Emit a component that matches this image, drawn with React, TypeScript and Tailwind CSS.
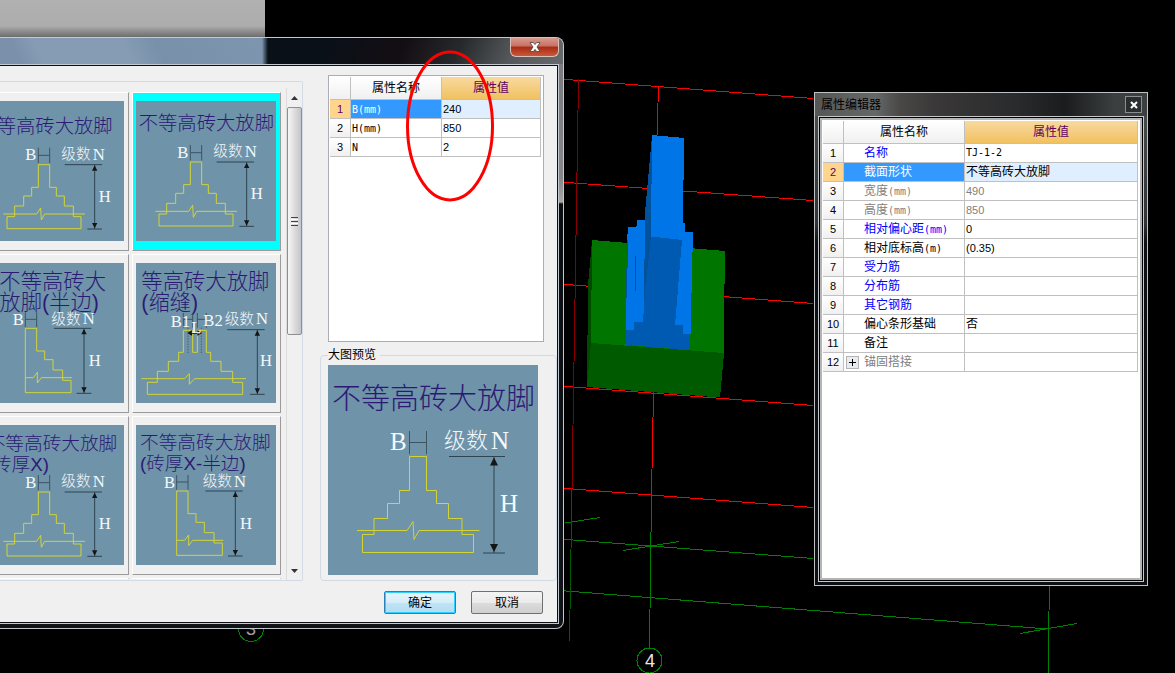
import type { ReactNode } from "react";
import clsx from "clsx";

type Row = {
  name: string;
  unit?: string;
  value?: string;
  tone?: "blue" | "gray";
  expandable?: boolean;
};

const sectionRows: Row[] = [
  { name: "", unit: "B(mm)", value: "240" },
  { name: "", unit: "H(mm)", value: "850" },
  { name: "", unit: "N", value: "2" },
];

const propertyRows: Row[] = [
  { name: "名称", value: "TJ-1-2", tone: "blue" },
  { name: "截面形状", value: "不等高砖大放脚", tone: "blue" },
  { name: "宽度", unit: "(mm)", value: "490", tone: "gray" },
  { name: "高度", unit: "(mm)", value: "850", tone: "gray" },
  { name: "相对偏心距", unit: "(mm)", value: "0", tone: "blue" },
  { name: "相对底标高", unit: "(m)", value: "(0.35)" },
  { name: "受力筋", tone: "blue" },
  { name: "分布筋", tone: "blue" },
  { name: "其它钢筋", tone: "blue" },
  { name: "偏心条形基础", value: "否" },
  { name: "备注" },
  { name: "锚固搭接", tone: "gray", expandable: true },
];

/** Latin text is set smaller than the Chinese text beside it */
function valueFont(value?: string) {
  if (!value) return "";
  if (/^[A-Z]/.test(value)) return "font-['DejaVu_Sans_Mono',monospace] text-[10px]";
  if (/^[\d(]/.test(value)) return "font-['Liberation_Sans',sans-serif] text-[11px]";
  return "";
}

/**
 * Grid with numbered rows, a name column and a value column
 * @param selected - index of the highlighted row
 * @param indent - leaves room for the expander in front of the names
 */
function PropertyTable({
  rows,
  selected,
  indent,
  label,
}: {
  rows: Row[];
  selected: number;
  indent?: boolean;
  label: string;
}) {
  const line = "border-b border-r border-[#c0c0c0]";
  return (
    <table
      aria-label={label}
      className="w-full table-fixed border-separate border-spacing-0 text-xs leading-[18px]"
    >
      <colgroup>
        <col className="w-[21px]" />
        <col className={indent ? "w-[121px]" : "w-[91px]"} />
        <col />
      </colgroup>
      <thead>
        <tr className="leading-[22px]">
          <th className={clsx(line, "bg-linear-to-b from-white to-[#f0f0f0] p-0")} />
          <th className={clsx(line, "bg-linear-to-b from-white to-[#f0f0f0] p-0 font-normal")}>
            属性名称
          </th>
          <th
            className={clsx(
              line,
              "bg-linear-to-b from-[#f9d99f] to-[#f1c15f] p-0 font-normal text-[#600060]",
            )}
          >
            属性值
          </th>
        </tr>
      </thead>
      <tbody>
        {rows.map((row, i) => {
          const active = i === selected;
          return (
            <tr key={row.name + row.unit}>
              <th
                scope="row"
                className={clsx(
                  line,
                  "p-0 font-['Liberation_Sans',sans-serif] text-[11px] font-normal",
                  active
                    ? "bg-[#ffd58d] text-[#600060]"
                    : "bg-linear-to-b from-white to-[#f0f0f0]",
                )}
              >
                {i + 1}
              </th>
              <td
                className={clsx(
                  line,
                  "p-0",
                  active && "bg-[#3399ff] text-white",
                  !active && row.tone === "blue" && "text-[#0000ff]",
                  !active && row.tone === "gray" && "text-[#808080]",
                )}
              >
                <div className="flex h-[18px] items-center">
                  {indent && (
                    <span className="flex w-[19px] shrink-0 pl-[2px]">
                      {row.expandable && (
                        <button
                          type="button"
                          aria-label="展开"
                          className="flex size-[13px] items-center justify-center border border-[#b4b4b4] bg-[#e8ebf0] text-black"
                        >
                          <svg viewBox="0 0 7 7" className="size-[7px]" stroke="currentColor">
                            <path d="M0 3.5H7M3.5 0V7" />
                          </svg>
                        </button>
                      )}
                    </span>
                  )}
                  <span className="whitespace-nowrap pl-px">
                    {row.name}
                    {row.unit && (
                      <span className="font-['DejaVu_Sans_Mono',monospace] text-[10px]">
                        {row.unit}
                      </span>
                    )}
                  </span>
                </div>
              </td>
              <td
                className={clsx(
                  line,
                  "py-0 pr-0 pl-px",
                  valueFont(row.value),
                  active && "bg-[#e0efff]",
                  row.tone === "gray" && "text-[#808080]",
                )}
              >
                {row.value}
              </td>
            </tr>
          );
        })}
      </tbody>
    </table>
  );
}

/** Text of a footing drawing, white serif for the dimension names */
function Mark({ x, y, children }: { x: number; y: number; children: string }) {
  return (
    <text x={x} y={y} fontSize={25} fill="#f4f9fc" className="font-['Liberation_Serif',serif]">
      {children}
    </text>
  );
}

function Levels({ x, y }: { x: number; y: number }) {
  return (
    <>
      <text x={x} y={y - 1} fontSize={22} fill="#f2f7fa" className="font-light">
        级数
      </text>
      <Mark x={x + 47} y={y}>
        N
      </Mark>
    </>
  );
}

/** Height dimension with arrow heads on both ends */
function HeightDim({ x, top, bottom }: { x: number; top: number; bottom: number }) {
  return (
    <g stroke="#2f4450" fill="none">
      <path
        vectorEffect="non-scaling-stroke"
        d={`M${x - 45} ${top}H${x + 11}M${x - 11} ${bottom}H${x + 11}M${x} ${top}V${bottom}`}
      />
      <path
        stroke="none"
        fill="#151515"
        d={`M${x} ${top + 1}l4 8h-8zM${x} ${bottom - 1}l4 -8h-8z`}
      />
    </g>
  );
}

function Outline({ d }: { d: string }) {
  return <path d={d} fill="none" stroke="#d2d436" strokeWidth={1} vectorEffect="non-scaling-stroke" />;
}

function Ticks({ d }: { d: string }) {
  return <path d={d} fill="none" stroke="#3c5563" strokeWidth={1} vectorEffect="non-scaling-stroke" />;
}

/** Symmetric stepped footing */
function FullFooting({ dy = 0 }: { dy?: number }) {
  return (
    <g transform={`translate(0 ${dy})`}>
      <Ticks d="M81.5 66V89M98.5 66V89M81.5 77.5H98.5" />
      <Mark x={62} y={85}>
        B
      </Mark>
      <Levels x={116} y={84} />
      <HeightDim x={166} top={91.5} bottom={188} />
      <Mark x={172} y={147}>
        H
      </Mark>
      <Outline d="M81.5 91.5H98.5V125.5H108.5V138.5H120.5V153.5H134V169.5H145.5V187.5H34.5V169.5H46V153.5H59.5V138.5H71.5V125.5H81.5Z" />
      <Outline d="M29 165.5H79L85 156.5L86 174.5L91 165.5H151.5" />
    </g>
  );
}

/** Footing stepped on its right side only */
function HalfFooting({ dx = 0, dy = 0 }: { dx?: number; dy?: number }) {
  return (
    <g transform={`translate(${dx} ${dy})`}>
      <Ticks d="M62 74V96M79 74V96M62 84.5H79" />
      <Mark x={43} y={93}>
        B
      </Mark>
      <Levels x={101} y={92} />
      <HeightDim x={150} top={98} bottom={195.5} />
      <Mark x={157} y={155}>
        H
      </Mark>
      <Outline d="M62 98H79V132H91V145H103.5V160.5H118V176H130.5V194.5H62Z" />
      <Outline d="M62 172H74L80 164V180L86 172H132" />
    </g>
  );
}

/** Footing with an expansion joint in the middle */
function JointFooting() {
  return (
    <g>
      <Ticks d="M71 75V97M85 75V97M71 84.5H85M92 75V97M105.5 75V97M92 84.5H105.5" />
      <path d="M78 97V136M98 97V136" stroke="#33444e" strokeDasharray="2 2" />
      <Outline d="M71 101H85V134H92V101H105.5V134H112V147.5H127.5V162.5H145V179H160V197H17V179H32V162.5H48.5V147.5H64V134H71Z" />
      <Outline d="M8 173.5H73L80 166V182L88 173.5H165" />
      <path d="M77 105l7 -4v8zM99 105l-7 -4v8zM80 104.5H96V106H80z" fill="#111" />
      <Mark x={52} y={96}>
        B1
      </Mark>
      <Mark x={101} y={95}>
        B2
      </Mark>
      <Mark x={83} y={105}>
        L
      </Mark>
      <Levels x={133} y={92} />
      <HeightDim x={182} top={100} bottom={197} />
      <Mark x={186} y={155}>
        H
      </Mark>
    </g>
  );
}

function Sketch({
  title,
  size,
  x,
  y,
  className,
  children,
}: {
  title: string[];
  size: number;
  x: number;
  y: number;
  className: string;
  children: ReactNode;
}) {
  return (
    <svg viewBox="0 0 210 210" className={clsx("block shrink-0 bg-[#6f93a9]", className)}>
      {title.map((text, i) => (
        <text
          key={text}
          x={x}
          y={y + i * 31}
          fontSize={size}
          fill="#2b1a74"
          className="font-light"
        >
          {text}
        </text>
      ))}
      {children}
    </svg>
  );
}

function Thumb({
  label,
  selected,
  children,
}: {
  label: string;
  selected?: boolean;
  children: ReactNode;
}) {
  return (
    <button
      type="button"
      aria-label={label}
      className={clsx(
        "h-[159px] w-[149px] border border-t-white border-r-[#9a9a9a] border-b-[#9a9a9a] border-l-white pt-2 pl-[3px]",
        selected ? "bg-[#00ffff]" : "bg-[#f0f0f0]",
      )}
    >
      <span className="flex h-full items-start">{children}</span>
    </button>
  );
}

function Thumbnails() {
  return (
    <div className="mt-[10px] flex h-[487px] min-w-0 flex-1 justify-end overflow-hidden">
      <div className="grid shrink-0 grid-cols-[149px_149px] content-start gap-x-[3px] gap-y-[3px]">
        <Thumb label="等高砖大放脚">
          <Sketch title={["不等高砖大放脚"]} size={29} x={-10} y={48} className="size-[140px]">
            <FullFooting dy={4} />
          </Sketch>
        </Thumb>
        <Thumb label="不等高砖大放脚" selected>
          <Sketch title={["不等高砖大放脚"]} size={29} x={4} y={44} className="size-[140px]">
            <FullFooting />
          </Sketch>
        </Thumb>
        <Thumb label="不等高砖大放脚(半边)">
          <Sketch title={["不等高砖大", "放脚(半边)"]} size={32} x={23} y={39} className="size-[140px]">
            <HalfFooting />
          </Sketch>
        </Thumb>
        <Thumb label="等高砖大放脚(缩缝)">
          <Sketch title={["等高砖大放脚", "(缩缝)"]} size={32} x={8} y={39} className="size-[140px]">
            <JointFooting />
          </Sketch>
        </Thumb>
        <Thumb label="不等高砖大放脚(砖厚X)">
          <Sketch title={["不等高砖大放脚", "(砖厚X)"]} size={28} x={4} y={38} className="size-[140px]">
            <FullFooting dy={9} />
          </Sketch>
        </Thumb>
        <Thumb label="不等高砖大放脚(砖厚X-半边)">
          <Sketch
            title={["不等高砖大放脚", "(砖厚X-半边)"]}
            size={28}
            x={6}
            y={36}
            className="size-[140px]"
          >
            <HalfFooting dx={-1} dy={1} />
          </Sketch>
        </Thumb>
        {/* next row, mostly scrolled out of sight */}
        <Thumb label="下一项">{null}</Thumb>
        <Thumb label="末项">{null}</Thumb>
      </div>
    </div>
  );
}

function ScrollBar() {
  return (
    <div className="mt-[6px] ml-[5px] flex w-4 shrink-0 flex-col border-l border-[#dcdcdc] bg-[#f0f0f0]">
      <button type="button" aria-label="向上滚动" className="flex h-[19px] items-center justify-center">
        <svg viewBox="0 0 7 4" className="h-1 w-[7px]">
          <path d="M0 4L3.5 0L7 4z" fill="#333" />
        </svg>
      </button>
      <div className="flex h-[228px] flex-col items-center justify-center gap-px rounded-xs border border-[#8f8f8f] bg-linear-to-r from-[#f6f6f6] to-[#c4c4c8]">
        <span className="h-px w-[7px] bg-[#444]" />
        <span className="h-px w-[7px] bg-[#fff]" />
        <span className="h-px w-[7px] bg-[#444]" />
        <span className="h-px w-[7px] bg-[#fff]" />
        <span className="h-px w-[7px] bg-[#444]" />
      </div>
      <div className="flex-1" />
      <button type="button" aria-label="向下滚动" className="flex h-[18px] items-center justify-center">
        <svg viewBox="0 0 7 4" className="h-1 w-[7px]">
          <path d="M0 0L3.5 4L7 0z" fill="#333" />
        </svg>
      </button>
    </div>
  );
}

/** Model view behind the windows: axis grid and the footing solid */
function Scene() {
  return (
    <svg
      viewBox="0 0 1175 673"
      className="absolute top-0 left-0 h-[673px] w-[1175px]"
      fill="none"
      aria-hidden="true"
    >
      <g stroke="#ff0000" shapeRendering="crispEdges">
        <path d="M560 79L813 98.5M560 182L813 200.5M560 284L813 303.5M560 386L813 405.5M560 488L813 507.5" />
        <path d="M658.5 86L657 136M653.5 392L651.5 495" />
        <path d="M578.5 79L572 488" stroke="#8a0000" />
      </g>
      <g stroke="#008000" shapeRendering="crispEdges">
        <path d="M560 539L813 558.5M560 590.5L1048 629" />
        <path d="M565 523L600 517.5M623 550.5L679 541.5M1020 633.5L1077 623.5" />
        <path d="M651.5 495L649.5 648M1049.5 580L1048 673" />
        <path d="M572 488L569.5 641" stroke="#005c00" />
        <circle cx="649.5" cy="660.5" r="12.5" />
        <circle cx="251" cy="629" r="12.5" />
      </g>
      <g shapeRendering="crispEdges">
        <path d="M592 240L591 343L587 387L588 285z" fill="#004a00" />
        <path d="M592 240L725 251L723.5 353L591 343z" fill="#007500" />
        <path d="M591 343L724 353L720 397.5L587 387z" fill="#005a00" />
        <path
          d="M652 135L684 138L683 223H685V231.5L693 232L690.5 334L689.5 350L625.5 345L627 240L628 227.5L636.5 226.5L637.5 219.5L645 220z"
          fill="#0075e8"
        />
        <path d="M652 135L651 236L644 308L645 213z" fill="#00529c" />
        <path
          d="M651 236.5L682 240L675 325H683V334H690.5L689.5 350L625.5 345V329.5H634V322H643L645 290z"
          fill="#005ab2"
        />
        <path d="M635.5 256V291M627.5 240L626.5 298" stroke="#00529c" />
      </g>
      <g fill="#e8e8e8" className="font-['Liberation_Sans',sans-serif]" textAnchor="middle">
        <text x="650" y="667" fontSize="18">
          4
        </text>
        <text x="251" y="635" fontSize="18" fill="#a0a0a0">
          3
        </text>
      </g>
    </svg>
  );
}

function ShapeDialog() {
  return (
    <section
      aria-label="选择截面形状"
      className="absolute top-[37px] left-0 w-[48%] min-w-[564px] overflow-hidden rounded-r-lg border-y border-r border-[#c3c9ce] bg-[linear-gradient(#77797b_0,#85878a_140px,#a8a8a8_164px,#0a0d12_166px,#101318_100%)]"
    >
      {/* title bar, glass over what lies behind */}
      <header className="flex h-[26px] items-start bg-[linear-gradient(115deg,#0a1018_0,#0a1018_300px,#140e13_370px,#26292c_420px,#55585b_470px,#75777a_560px)] pr-1">
        <div className="h-full w-[268px] bg-[linear-gradient(90deg,transparent_262px,#0a1018_268px),linear-gradient(65deg,#7b90aa_0,#7b90aa_20px,#869cb5_40px,#869cb5_120px,#7890aa_150px,#7e96b0_262px)]" />
        <button
          type="button"
          aria-label="关闭"
          className="ml-auto flex h-[19px] w-[49px] items-center justify-center rounded-b-md border border-t-0 border-[#d9c0bb] bg-[linear-gradient(#d79a8f_0,#c96f60_45%,#a82a14_50%,#c8593a_100%)]"
        >
          <svg viewBox="0 0 12 10" className="h-[10px] w-3">
            <path
              d="M1 .5H4.3L6 2.6L7.7 .5H11L8 5L11 9.5H7.7L6 7.4L4.3 9.5H1L4 5z"
              fill="#fff"
              stroke="#4c4040"
              strokeWidth=".8"
            />
          </svg>
        </button>
      </header>
      <div className="mr-1 mb-1 border-y border-r border-[#c3c9ce]">
        <div className="border-y border-r border-[#0c0f14] bg-[#f0f0f0]">
          <div className="flex gap-[17px]">
            {/* shape list */}
            <div className="mt-[15px] flex min-w-0 flex-1 rounded-r-xs border-y border-r border-[#d0dbe6]">
              <Thumbnails />
              <ScrollBar />
            </div>
            {/* section sizes and large preview */}
            <div className="flex w-[237px] shrink-0 flex-col pt-[9px]">
              <div className="mr-[13px] ml-2 h-[267px] border border-[#abadb3] bg-white pt-px pr-[2px] pl-px">
                <PropertyTable label="截面尺寸" rows={sectionRows} selected={0} />
              </div>
              <fieldset className="mt-[6px] rounded-sm border border-[#d0dbe6] pb-[5px] pl-[7px]">
                <legend className="pr-1 text-xs leading-[14px]">大图预览</legend>
                <Sketch
                  title={["不等高砖大放脚"]}
                  size={29}
                  x={4}
                  y={44}
                  className="mt-[3px] size-[210px]"
                >
                  <FullFooting />
                </Sketch>
              </fieldset>
            </div>
          </div>
          <footer className="flex justify-end gap-[15px] pt-[10px] pr-[14px] pb-2 text-xs">
            <button
              type="button"
              className="h-[23px] w-[72px] rounded-xs border border-[#2c7fb8] bg-[linear-gradient(#e8f5fc_0,#d5edf9_50%,#bfe3f6_52%,#b5dcf2_100%)] leading-none ring-1 ring-[#2fd0ff] ring-inset"
            >
              确定
            </button>
            <button
              type="button"
              className="h-[23px] w-[72px] rounded-xs border border-[#707070] bg-[linear-gradient(#f3f3f3_0,#ebebeb_50%,#dcdcdc_52%,#cfcfcf_100%)] leading-none"
            >
              取消
            </button>
          </footer>
        </div>
      </div>
    </section>
  );
}

function PropertyEditor() {
  return (
    <section
      aria-labelledby="editor-title"
      className="absolute top-[92px] right-[27px] bottom-[87px] flex w-[334px] flex-col border border-[#bfc2c4] bg-[linear-gradient(#4c4f50_0,#303436_130px,#0c0f13_150px,#0c0f13_100%)] px-[3px] pb-[3px]"
    >
      <header className="-mx-[3px] flex h-[23px] shrink-0 items-center justify-between bg-[linear-gradient(90deg,#555757_0,#666868_60px,#4a4747_85px,#3a3838_120px,#2a2b2d_200px,#1a1c1e_250px,#3c3f40_300px,#3c3f40_100%)] pr-[5px] pl-[6px]">
        <h1 id="editor-title" className="text-xs text-black">
          属性编辑器
        </h1>
        <button
          type="button"
          aria-label="关闭"
          className="flex size-[17px] items-center justify-center border border-[#8b8e90] bg-[#2b2e31]"
        >
          <svg viewBox="0 0 8 8" className="size-2" stroke="#fff" strokeWidth="2">
            <path d="M1 1L7 7M7 1L1 7" />
          </svg>
        </button>
      </header>
      <div className="flex flex-1 flex-col border border-[#c6c8ca] bg-black p-px">
        <div className="flex-1 border-2 border-[#b4b4b4] bg-white pt-px pr-[2px] pl-px">
          <PropertyTable label="构件属性" rows={propertyRows} selected={1} indent />
        </div>
      </div>
    </section>
  );
}

export default function App() {
  return (
    <main className="relative min-h-screen overflow-hidden bg-black font-['Liberation_Sans','Noto_Sans_CJK_SC',sans-serif] text-black">
      <Scene />
      {/* window left over behind the dialog */}
      <div className="h-[37px] w-[265px] bg-[linear-gradient(#b1b1b1_0,#adadad_70%,#6d6d6d_100%)]" />
      <ShapeDialog />
      <PropertyEditor />
      {/* hand-drawn mark round the values */}
      <svg
        viewBox="0 0 90 152"
        className="pointer-events-none absolute top-[50px] left-[405px] h-[152px] w-[90px]"
        aria-hidden="true"
      >
        <ellipse cx="45" cy="76" rx="42.5" ry="74" fill="none" stroke="#f00" strokeWidth="3" />
      </svg>
    </main>
  );
}
